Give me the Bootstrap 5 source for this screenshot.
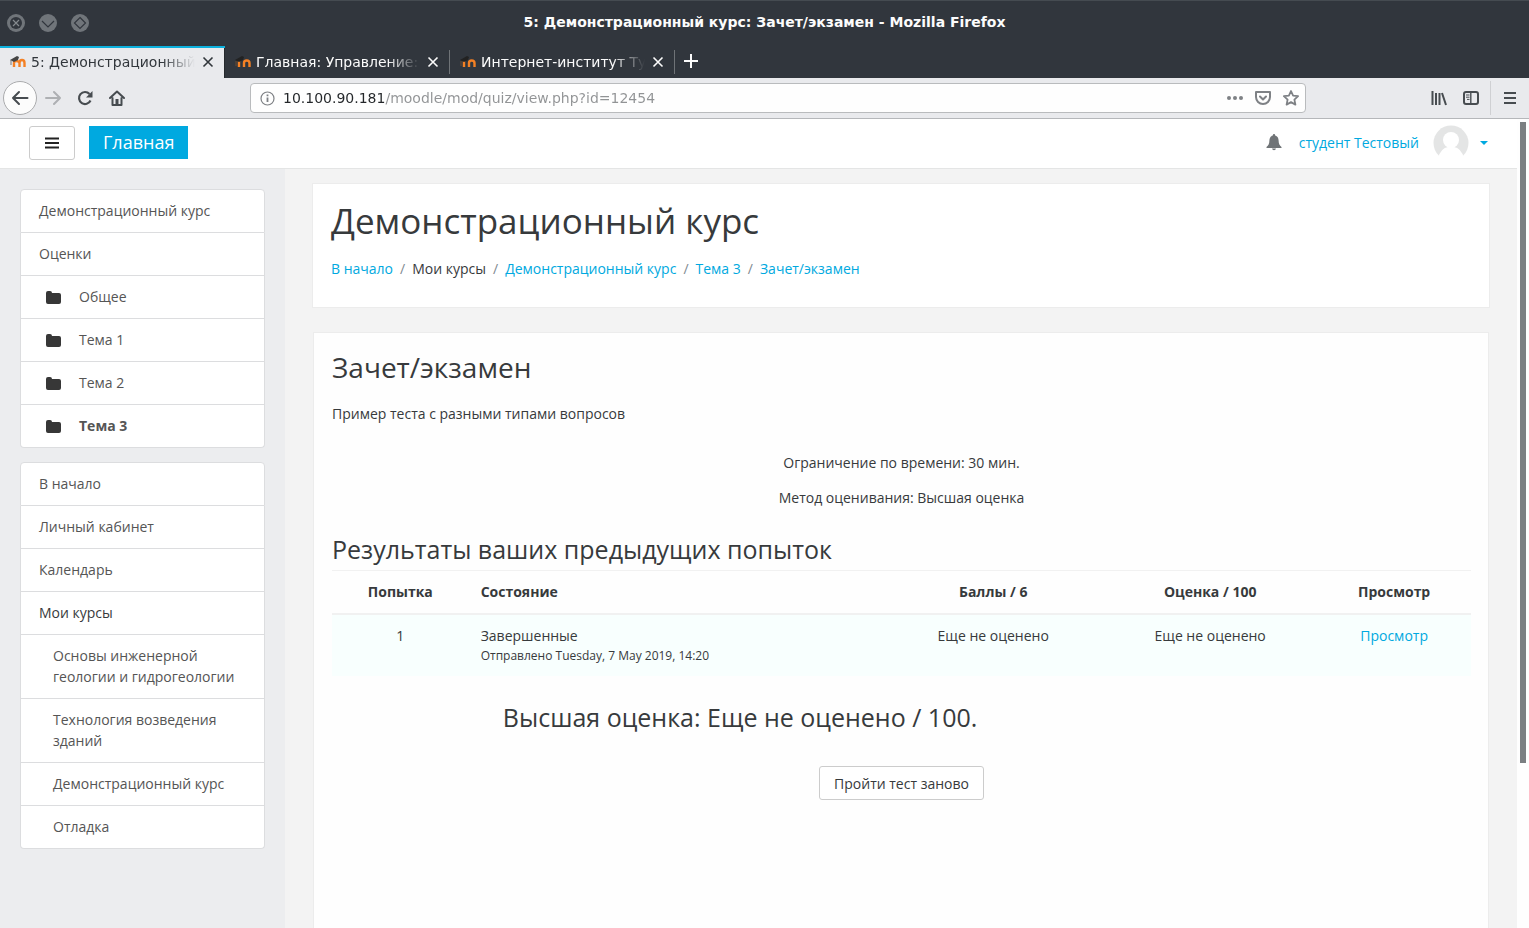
<!DOCTYPE html>
<html lang="ru">
<head>
<meta charset="utf-8">
<meta name="viewport" content="width=device-width, initial-scale=1">
<title>5: Демонстрационный курс: Зачет/экзамен</title>
<link href="https://cdn.jsdelivr.net/npm/bootstrap@5.3.0/dist/css/bootstrap.min.css" rel="stylesheet">
<style>
:root { --accent: #00a9e0; --ink: #373a3c; --line: #dcdddf; }
body { font-family: "Open Sans", "Noto Sans", sans-serif; font-size: 14px; line-height: 21px; color: var(--ink); background: #fefefe; }
a { color: var(--accent); text-decoration: none; }
svg { display: block; flex: none; }
.window-head, .browser-bar { font-family: "DejaVu Sans", sans-serif; }
.window-head { background: #31363d; color: #fcfcfc; border-top: 1px solid #454b51; }
.title-row { height: 45px; padding-left: 6px; }
.title-row .caption { font-size: 14px; font-weight: 700; padding-bottom: 2px; }
.win-btn { width: 20px; height: 20px; margin-right: 12px; }
.tab-row { height: 32px; }
.browser-tab { width: 225px; height: 32px; padding: 0 9px 0 10px; }
.browser-tab + .browser-tab::after { content: ""; position: absolute; right: 0; top: 4px; bottom: 4px; width: 1px; background: #6f7377; }
.browser-tab.current { width: 225px; background: #e9eaed; color: #31363b; box-shadow: inset 0 2px #0db1de, inset -1px 0 #25292d; }
.tab-label { color: inherit; flex: 1 1 0; min-width: 0; overflow: hidden; white-space: nowrap; margin: 0 5px; -webkit-mask-image: linear-gradient(90deg, #000 80%, transparent); mask-image: linear-gradient(90deg, #000 80%, transparent); }
.plain { border: 0; background: none; padding: 0; color: inherit; }
.browser-bar { height: 41px; background: #e9eaed; border-bottom: 1px solid #b5b7ba; color: #474c50; padding: 0 12px 0 3px; }
.back-btn { width: 34px; height: 34px; border: 1px solid #aaabad; border-radius: 50%; background: #fcfcfc; padding: 0; color: inherit; }
.url-box { height: 30px; border: 1px solid #b9bbbd; border-radius: 4px; background: #fefefe; padding: 0 6px 0 9px; margin-left: 125px; margin-right: 125px; color: #7e8185; }
.url-box input { border: 0; outline: 0; padding: 0; min-width: 0; color: transparent; background: linear-gradient(90deg, #232629 102px, #919395 102px); -webkit-background-clip: text; background-clip: text; }
.menu-sep { border-left: 1px solid #cfd0d3; height: 34px; padding-left: 12px; margin-left: 11px; }
.page { min-height: calc(100vh - 119px); margin-right: 12px; }
.site-nav { height: 50px; background: #fff; border-bottom: 1px solid #e4e5e5; padding: 0 29px 2px; }
.menu-btn { width: 46px; height: 34px; border: 1px solid #ccc; border-radius: 3px; background: #fff; padding: 0; }
.home-link { background: var(--accent); color: #fff; font-size: 18px; line-height: 33px; padding: 0 14px; margin-left: 14px; }
.avatar { margin: 0 11px 0 14px; }
.sidebar { width: 285px; background: #ecedef; padding: 20px; }
.side-list { --bs-list-group-border-color: var(--line); --bs-list-group-border-radius: 4px; margin-bottom: 14px; }
.side-list .list-group-item { color: #555; padding: 10px 18px 11px; border-color: var(--line); }
.side-list .list-group-item.here { color: var(--ink); }
.side-list .list-group-item.sub { padding-left: 32px; }
.side-list .list-group-item.folder { padding-left: 25px; }
.folder svg { margin-right: 18px; color: #373737; }
.content { background: #f3f3f3; padding: 14px 27px 0; }
.panel { background: #fff; border: 1px solid #ececec; }
.panel-head { padding: 17px 18px 28px; margin-bottom: 24px; }
.panel-body { padding: 18px 17px 24px 18px; margin: 0 1px; background: #fefefe; }
h1 { font-size: 35px; line-height: 40px; font-weight: 400; margin-bottom: 17px; }
h2 { font-size: 28px; line-height: 32px; font-weight: 400; margin-bottom: 20px; }
h3 { font-size: 25px; line-height: 30px; font-weight: 400; margin: 0; }
.breadcrumb { --bs-breadcrumb-item-padding-x: 7px; --bs-breadcrumb-divider-color: #818a91; margin-bottom: 0; }
.intro { margin-bottom: 28px; }
.facts p { margin-bottom: 14px; }
.facts { margin-bottom: 26px; }
.attempts { --bs-table-bg: transparent; color: var(--ink); table-layout: fixed; margin-top: 6px; margin-bottom: 26px; }
.attempts > :not(caption) > * > * { padding: 10px 12px; color: var(--ink); border: 0; }
.attempts thead th { border-top: 1px solid #f1f1f1; border-bottom: 2px solid #f1f1f1; padding-bottom: 11px; }
.attempts tbody td { background: #f8fffe; }
.attempts .when { font-size: 12px; line-height: 20px; }
.best { padding-left: 15%; margin-bottom: 34px; }
.retry { background: #fff; border: 1px solid #ccc; border-radius: 3px; color: var(--ink); height: 34px; padding: 0 14px; }
.scroll-thumb { top: 122px; right: 3px; width: 6px; height: 641px; background: #7b7f82; }
</style>
</head>
<body>
<header class="window-head">
  <div class="title-row d-flex align-items-center position-relative">
    <button class="plain win-btn" aria-label="Закрыть окно"><svg width="20" height="20" viewBox="0 0 20 20" fill="none"><circle cx="10" cy="9" r="9" fill="#70757a"/><circle cx="10" cy="9" r="6" fill="#31363d"/><path d="M7 6l6 6M13 6l-6 6" stroke="#858a8e" stroke-width="1.2"/></svg></button>
    <button class="plain win-btn" aria-label="Свернуть"><svg width="20" height="20" viewBox="0 0 20 20" fill="none"><circle cx="10" cy="9" r="9" fill="#70757a"/><path d="M4 7l6 6 6-6" stroke="#31363d" stroke-width="1.2"/></svg></button>
    <button class="plain win-btn" aria-label="Развернуть"><svg width="20" height="20" viewBox="0 0 20 20" fill="none"><circle cx="10" cy="9" r="9" fill="#70757a"/><path d="M10 3.500l5.500 5.500-5.500 5.500L4.500 9z" stroke="#31363d" stroke-width="1.200"/></svg></button>
    <span class="caption position-absolute start-0 end-0 text-center pe-none">5: Демонстрационный курс: Зачет/экзамен - Mozilla Firefox</span>
  </div>
  <nav class="tab-row d-flex align-items-center" aria-label="Вкладки">
    <div class="browser-tab current d-flex align-items-center position-relative">
      <svg width="16" height="14" viewBox="0 0 16 14" fill="none"><path d="M4 12V8q0-2 2-2 3 0 3.500 2V12M9.500 12V8q0-3 2.500-3t2.500 3v4" stroke="#f48024" stroke-width="2.400"/><path d="M0 5l7-4 2 1-1 3-4 2z" fill="#444"/><path d="M1 5v5" stroke="#777"/></svg>
      <a class="tab-label" href="#">5: Демонстрационный</a>
      <button class="plain" aria-label="Закрыть вкладку"><svg width="16" height="16" viewBox="0 0 16 16" fill="none" stroke="currentColor" stroke-width="1.600"><path d="M3.500 3.500l9 9M12.500 3.500l-9 9"/></svg></button>
    </div>
    <div class="browser-tab d-flex align-items-center position-relative">
      <svg width="16" height="14" viewBox="0 0 16 14" fill="none"><path d="M4 12V6M9 12V8q0-2.500 2.700-2.500T14.500 8v4" stroke="#f48024" stroke-width="2.400"/><path d="M0 5l7-4 2 1-1 3-4 2z" fill="#222"/><path d="M1 6v5" stroke="#6a4a32"/></svg>
      <a class="tab-label" href="#">Главная: Управление:</a>
      <button class="plain" aria-label="Закрыть вкладку"><svg width="16" height="16" viewBox="0 0 16 16" fill="none" stroke="currentColor" stroke-width="1.600"><path d="M3.500 3.500l9 9M12.500 3.500l-9 9"/></svg></button>
    </div>
    <div class="browser-tab d-flex align-items-center position-relative">
      <svg width="16" height="14" viewBox="0 0 16 14" fill="none"><path d="M4 12V6M9 12V8q0-2.500 2.700-2.500T14.500 8v4" stroke="#f48024" stroke-width="2.400"/><path d="M0 5l7-4 2 1-1 3-4 2z" fill="#222"/><path d="M1 6v5" stroke="#6a4a32"/></svg>
      <a class="tab-label" href="#">Интернет-институт Ту</a>
      <button class="plain" aria-label="Закрыть вкладку"><svg width="16" height="16" viewBox="0 0 16 16" fill="none" stroke="currentColor" stroke-width="1.600"><path d="M3.500 3.500l9 9M12.500 3.500l-9 9"/></svg></button>
    </div>
    <button class="plain ms-2" aria-label="Новая вкладка"><svg width="16" height="16" viewBox="0 0 16 16" fill="none" stroke="currentColor" stroke-width="2"><path d="M8 0v14M1 7h14"/></svg></button>
  </nav>
</header>

<div class="browser-bar d-flex align-items-center">
  <button class="back-btn d-flex align-items-center justify-content-center" aria-label="Назад"><svg width="18" height="16" viewBox="0 0 18 16" fill="none" stroke="currentColor" stroke-width="2" stroke-linecap="round" stroke-linejoin="round"><path d="M16.500 8H2M8 2L2 8l6 6"/></svg></button>
  <button class="plain ms-2" aria-label="Вперёд"><svg width="16" height="16" viewBox="0 0 16 16" fill="none" stroke="#aeb0b3" stroke-width="2" stroke-linecap="round" stroke-linejoin="round"><path d="M1 8h14M9 2l6 6-6 6"/></svg></button>
  <button class="plain ms-3" aria-label="Обновить"><svg width="16" height="16" viewBox="0 0 16 16" fill="none" stroke="currentColor" stroke-width="2.200"><path d="M13.500 10.500A6 6 0 1 1 12.500 4"/><path d="M15.500 1v6.500H9z" fill="currentColor" stroke="none"/></svg></button>
  <button class="plain ms-3" aria-label="Домой"><svg width="16" height="16" viewBox="0 0 16 16" fill="none" stroke="currentColor" stroke-width="2" stroke-linejoin="round" stroke-linecap="round"><path d="M1 8l7-6.500L15 8M3.500 8v7h9V8"/><path d="M8 9v5" stroke-width="3" stroke-linecap="butt"/></svg></button>
  <div class="url-box d-flex align-items-center flex-grow-1">
    <svg width="15" height="15" viewBox="0 0 15 15" fill="none" stroke="currentColor"><circle cx="7.500" cy="7.500" r="6.500" stroke-width="1.200"/><path d="M7.500 6.500V11M7.500 3.500v1.800" stroke-width="1.800"/></svg>
    <input class="flex-grow-1 ms-2" type="text" aria-label="Адрес" value="10.100.90.181/moodle/mod/quiz/view.php?id=12454">
    <button class="plain" aria-label="Действия"><svg width="16" height="16" viewBox="0 0 16 16" fill="currentColor"><circle cx="2" cy="8" r="2"/><circle cx="8" cy="8" r="2"/><circle cx="14" cy="8" r="2"/></svg></button>
    <button class="plain mx-2 px-1" aria-label="Pocket"><svg width="16" height="16" viewBox="0 0 16 16" fill="none" stroke="currentColor" stroke-width="2" stroke-linejoin="round" stroke-linecap="round"><path d="M1 2h14v5a7 7 0 0 1-14 0z"/><path d="M5 6.500l3 3 3-3"/></svg></button>
    <button class="plain" aria-label="В закладки"><svg width="16" height="16" viewBox="0 0 16 16" fill="none" stroke="currentColor" stroke-width="1.800" stroke-linejoin="round"><path d="M8 1l2.100 4.600 5 .6-3.700 3.400 1 5L8 12.100l-4.400 2.500 1-5L.9 6.200l5-.6z"/></svg></button>
  </div>
  <button class="plain" aria-label="Библиотека"><svg width="16" height="16" viewBox="0 0 16 16" fill="none" stroke="currentColor" stroke-width="2"><path d="M1.500 1v14M5 3v12M8.500 3v12M11 3l4 12"/></svg></button>
  <button class="plain ms-3" aria-label="Боковая панель"><svg width="16" height="16" viewBox="0 0 16 16" fill="none" stroke="currentColor"><rect x="1" y="2" width="14" height="12" rx="2" stroke-width="2"/><path d="M7.800 2v12" stroke-width="1.400"/><path d="M3 5h3.500M3 7.200h3.500M4 9.400h2.500"/></svg></button>
  <div class="menu-sep d-flex align-items-center"><button class="plain" aria-label="Меню"><svg width="14" height="14" viewBox="0 0 14 14" stroke="currentColor" stroke-width="2"><path d="M1 2h12M1 7h12M1 12h12"/></svg></button></div>
</div>

<div class="page d-flex flex-column">
  <nav class="site-nav d-flex align-items-center">
    <button class="menu-btn d-flex align-items-center justify-content-center" aria-label="Навигация"><svg width="14" height="14" viewBox="0 0 14 14" stroke="#222" stroke-width="2"><path d="M0 2.500h14M0 7h14M0 11.500h14"/></svg></button>
    <a class="home-link" href="#">Главная</a>
    <a class="ms-auto me-3" href="#" aria-label="Уведомления"><svg width="18" height="17" viewBox="0 0 18 17" fill="#707477"><path d="M9 0q1.200 0 1.200 1.400C12.500 2 13.500 4 13.600 6.500c.1 3.500 1 5 2.900 6.500v1h-15v-1c1.900-1.500 2.800-3 2.900-6.500C4.500 4 5.500 2 7.800 1.400Q7.800 0 9 0zM7 14.500h4q-.3 1.800-2 1.800t-2-1.800z"/></svg></a>
    <a class="d-flex align-items-center" href="#"><span>студент Тестовый</span>
      <svg class="avatar" width="36" height="36" viewBox="0 0 36 36"><defs><clipPath id="face"><circle cx="18" cy="18" r="17.500"/></clipPath></defs><circle cx="18" cy="18" r="17.500" fill="#e4e5e5"/><path d="M0 31h36v5H0z" fill="#fff"/><g fill="#fff" clip-path="url(#face)"><circle cx="18" cy="15" r="8"/><path d="M5 33q3-10 10-11h6q7 1 10 11v4H5z"/></g></svg>
      <svg width="8" height="4" viewBox="0 0 8 4" fill="currentColor"><path d="M0 0h8L4 4z"/></svg></a>
  </nav>
  <div class="d-flex flex-grow-1">
    <aside class="sidebar flex-shrink-0">
      <div class="list-group side-list">
        <a class="list-group-item" href="#">Демонстрационный курс</a>
        <a class="list-group-item" href="#">Оценки</a>
        <a class="list-group-item folder d-flex align-items-center" href="#"><svg width="15" height="14" viewBox="0 0 15 14" fill="currentColor"><path d="M0 3q0-2 2-2h2q2 0 2 2h7q2 0 2 2v7q0 2-2 2H2q-2 0-2-2z"/></svg>Общее</a>
        <a class="list-group-item folder d-flex align-items-center" href="#"><svg width="15" height="14" viewBox="0 0 15 14" fill="currentColor"><path d="M0 3q0-2 2-2h2q2 0 2 2h7q2 0 2 2v7q0 2-2 2H2q-2 0-2-2z"/></svg>Тема 1</a>
        <a class="list-group-item folder d-flex align-items-center" href="#"><svg width="15" height="14" viewBox="0 0 15 14" fill="currentColor"><path d="M0 3q0-2 2-2h2q2 0 2 2h7q2 0 2 2v7q0 2-2 2H2q-2 0-2-2z"/></svg>Тема 2</a>
        <a class="list-group-item folder d-flex align-items-center fw-bold" href="#"><svg width="15" height="14" viewBox="0 0 15 14" fill="currentColor"><path d="M0 3q0-2 2-2h2q2 0 2 2h7q2 0 2 2v7q0 2-2 2H2q-2 0-2-2z"/></svg>Тема 3</a>
      </div>
      <div class="list-group side-list">
        <a class="list-group-item" href="#">В начало</a>
        <a class="list-group-item" href="#">Личный кабинет</a>
        <a class="list-group-item" href="#">Календарь</a>
        <div class="list-group-item here">Мои курсы</div>
        <a class="list-group-item sub" href="#">Основы инженерной геологии и гидрогеологии</a>
        <a class="list-group-item sub" href="#">Технология возведения зданий</a>
        <a class="list-group-item sub" href="#">Демонстрационный курс</a>
        <a class="list-group-item sub" href="#">Отладка</a>
      </div>
    </aside>
    <main class="content flex-grow-1 d-flex flex-column">
      <section class="panel panel-head">
        <h1>Демонстрационный курс</h1>
        <nav aria-label="breadcrumb"><ol class="breadcrumb">
          <li class="breadcrumb-item"><a href="#">В начало</a></li>
          <li class="breadcrumb-item">Мои курсы</li>
          <li class="breadcrumb-item"><a href="#">Демонстрационный курс</a></li>
          <li class="breadcrumb-item"><a href="#">Тема 3</a></li>
          <li class="breadcrumb-item"><a href="#">Зачет/экзамен</a></li>
        </ol></nav>
      </section>
      <section class="panel panel-body border-bottom-0 flex-grow-1">
        <h2>Зачет/экзамен</h2>
        <p class="intro">Пример теста с разными типами вопросов</p>
        <div class="facts text-center"><p>Ограничение по времени: 30 мин.</p><p>Метод оценивания: Высшая оценка</p></div>
        <h3>Результаты ваших предыдущих попыток</h3>
        <table class="table attempts text-center">
          <colgroup><col style="width:12%"><col style="width:36.400%"><col style="width:19.300%"><col style="width:18.800%"><col style="width:13.500%"></colgroup>
          <thead><tr><th scope="col">Попытка</th><th scope="col" class="text-start">Состояние</th><th scope="col">Баллы / 6</th><th scope="col">Оценка / 100</th><th scope="col">Просмотр</th></tr></thead>
          <tbody><tr><td>1</td><td class="text-start">Завершенные<div class="when">Отправлено Tuesday, 7 May 2019, 14:20</div></td><td>Еще не оценено</td><td>Еще не оценено</td><td><a href="#">Просмотр</a></td></tr></tbody>
        </table>
        <h3 class="best">Высшая оценка: Еще не оценено / 100.</h3>
        <div class="text-center"><button class="retry">Пройти тест заново</button></div>
      </section>
    </main>
  </div>
</div>
<div class="scroll-thumb position-absolute"></div>
<script src="https://cdn.jsdelivr.net/npm/bootstrap@5.3.0/dist/js/bootstrap.bundle.min.js"></script>
</body>
</html>
